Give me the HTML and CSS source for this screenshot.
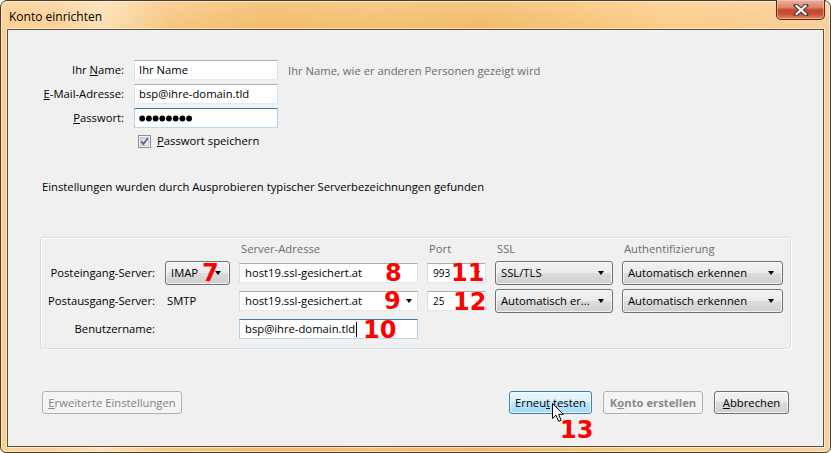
FILE: index.html
```html
<!DOCTYPE html>
<html lang="de">
<head>
<meta charset="utf-8">
<title>Konto einrichten</title>
<link rel="stylesheet" href="styles.css">
</head>
<body>
<div class="window">
  <div class="titlebar">
    <span class="title">Konto einrichten</span>
    <div class="close">
      <svg width="16" height="12" viewBox="0 0 16 12">
        <path d="M3 1.5 L13 10.5 M13 1.5 L3 10.5" stroke="#4a3a3a" stroke-width="4.2" stroke-linecap="square" fill="none"/>
        <path d="M3.5 2 L12.5 10 M12.5 2 L3.5 10" stroke="#ffffff" stroke-width="2.2" stroke-linecap="square" fill="none"/>
      </svg>
    </div>
  </div>
  <div class="client">
    <div class="identity">
      <label class="lbl">Ihr <u>N</u>ame:</label>
      <div class="textbox">Ihr Name</div>
      <span class="hint">Ihr Name, wie er anderen Personen gezeigt wird</span>
      <label class="lbl"><u>E</u>-Mail-Adresse:</label>
      <div class="textbox">bsp@ihre-domain.tld</div>
      <span></span>
      <label class="lbl"><u>P</u>asswort:</label>
      <div class="textbox focus">
        <svg width="56" height="7" viewBox="0 0 56 7">
          <circle cx="3.2" cy="3.5" r="2.9" fill="#000"/>
          <circle cx="9.9" cy="3.5" r="2.9" fill="#000"/>
          <circle cx="16.6" cy="3.5" r="2.9" fill="#000"/>
          <circle cx="23.3" cy="3.5" r="2.9" fill="#000"/>
          <circle cx="30.0" cy="3.5" r="2.9" fill="#000"/>
          <circle cx="36.7" cy="3.5" r="2.9" fill="#000"/>
          <circle cx="43.4" cy="3.5" r="2.9" fill="#000"/>
          <circle cx="50.1" cy="3.5" r="2.9" fill="#000"/>
        </svg>
      </div>
      <span></span>
      <span></span>
      <div class="check">
        <svg width="13" height="13" viewBox="0 0 13 13">
          <defs>
            <linearGradient id="cb" x1="0" y1="0" x2="1" y2="1">
              <stop offset="0" stop-color="#cdd1d6"/>
              <stop offset="1" stop-color="#f7f7f7"/>
            </linearGradient>
          </defs>
          <rect x="0.5" y="0.5" width="12" height="12" fill="#f4f4f4" stroke="#8f8f8f"/>
          <rect x="2.5" y="2.5" width="8" height="8" fill="url(#cb)" stroke="#a9adb3" stroke-width="0.6"/>
          <path d="M3.3 6.4 L5.4 9 L9.8 3.2" stroke="#4d6297" stroke-width="1.7" fill="none"/>
        </svg>
        <span><u>P</u>asswort speichern</span>
      </div>
    </div>

    <p class="status">Einstellungen wurden durch Ausprobieren typischer Serverbezeichnungen gefunden</p>

    <div class="group">
      <span></span>
      <span></span>
      <span class="head">Server-Adresse</span>
      <span class="head">Port</span>
      <span class="head">SSL</span>
      <span class="head">Authentifizierung</span>

      <span class="glbl">Posteingang-Server:</span>
      <div class="dropdown"><span>IMAP</span><i class="arrow"></i></div>
      <div class="cell"><div class="textbox">host19.ssl-gesichert.at</div></div>
      <div class="cell"><div class="textbox small">993<i class="arrow"></i></div></div>
      <div class="dropdown"><span>SSL/TLS</span><i class="arrow"></i></div>
      <div class="dropdown"><span>Automatisch erkennen</span><i class="arrow"></i></div>

      <span class="glbl">Postausgang-Server:</span>
      <span class="plain">SMTP</span>
      <div class="cell"><div class="textbox">host19.ssl-gesichert.at<i class="arrow"></i></div></div>
      <div class="cell"><div class="textbox small">25</div></div>
      <div class="dropdown"><span>Automatisch er...</span><i class="arrow"></i></div>
      <div class="dropdown"><span>Automatisch erkennen</span><i class="arrow"></i></div>

      <span class="glbl">Benutzername:</span>
      <span></span>
      <div class="cell"><div class="textbox focus">bsp@ihre-domain.tld<i class="caret"></i></div></div>
    </div>

    <div class="actions">
      <button class="btn disabled"><u>E</u>rweiterte Einstellungen</button>
      <div class="right">
        <button class="btn hover">Erneu<u>t</u> testen</button>
        <button class="btn disabled default">K<u>o</u>nto erstellen</button>
        <button class="btn"><u>A</u>bbrechen</button>
      </div>
    </div>
  </div>

  <span class="num n7">7</span>
  <span class="num n8">8</span>
  <span class="num n9">9</span>
  <span class="num n10">10</span>
  <span class="num n11">11</span>
  <span class="num n12">12</span>
  <span class="num n13">13</span>

  <svg class="cursor" width="13" height="20" viewBox="0 0 13 20">
    <path d="M0.5 0.5 L0.5 15.5 L4 12.2 L6.6 18.3 L9.1 17.2 L6.6 11.3 L11.3 11.3 Z" fill="#ffffff" stroke="#000000" stroke-width="1" stroke-linejoin="round"/>
  </svg>
</div>
</body>
</html>
```

FILE: styles.css
```css
html, body {
  margin: 0;
  padding: 0;
  background: #ffffff;
}

body {
  font-family: "Open Sans", "Noto Sans", "Liberation Sans", sans-serif;
  font-size: 11.25px;
  color: #000000;
}

.window {
  position: relative;
  width: 831px;
  height: 453px;
  box-sizing: border-box;
  border: 1px solid #4c3c26;
  border-radius: 7px 7px 6px 6px;
  padding: 0 6px 5px 6px;
  display: flex;
  flex-direction: column;
  background:
    linear-gradient(to bottom, rgba(255,255,255,0.18) 0px, rgba(255,255,255,0) 28px),
    linear-gradient(to right, #fbd093 0%, #fbd096 6%, #fde0b4 12%, #f7c680 20%, #f2bb6a 32%, #f4bf70 45%, #f1ba68 58%, #f7c478 70%, #fbcd8a 82%, #f8cb8e 92%, #f7d09c 100%);
  box-shadow: inset 0 0 0 1px rgba(255,255,255,0.55);
}

.titlebar {
  height: 28px;
  display: flex;
  align-items: flex-start;
}

.title {
  margin: 8px 0 0 2px;
  font-size: 12px;
  line-height: 16px;
  color: #000000;
}

.close {
  margin-left: auto;
  margin-top: -1px;
  margin-right: -1px;
  width: 49px;
  height: 20px;
  box-sizing: border-box;
  border: 1px solid #5c2a1c;
  border-top: none;
  border-radius: 0 0 5px 5px;
  background: linear-gradient(to bottom, #eab3a2 0%, #dd806a 40%, #c8462a 52%, #c9512f 75%, #e08f6a 100%);
  box-shadow: inset 0 0 0 1px rgba(255,220,200,0.45);
  display: flex;
  align-items: center;
  justify-content: center;
}

.client {
  flex: 1;
  border: 1px solid #5e4e36;
  background: #f0f0f0;
  display: flex;
  flex-direction: column;
  box-shadow: 0 0 0 1px rgba(255,255,255,0.5);
}

/* identity form */
.identity {
  display: grid;
  grid-template-columns: 116px 144px auto;
  grid-template-rows: 20px 20px 20px 18px;
  column-gap: 10px;
  row-gap: 4px;
  margin-top: 30px;
  align-items: center;
}

.lbl {
  text-align: right;
  line-height: 16px;
  white-space: nowrap;
}

.hint {
  color: #6d6d6d;
  white-space: nowrap;
}

.textbox {
  position: relative;
  box-sizing: border-box;
  height: 20px;
  background: #ffffff;
  border: 1px solid #dbdfe6;
  border-top-color: #abadb3;
  border-bottom-color: #e3e9ef;
  padding: 0 4px;
  display: flex;
  align-items: center;
  line-height: 16px;
  white-space: nowrap;
}

.textbox.focus {
  border-color: #b5cfe7;
  border-top-color: #3d7bad;
  border-bottom-color: #b7d9ed;
}

.textbox.small {
  font-size: 10px;
  padding-left: 3px;
}

.check {
  grid-column: 2 / 4;
  display: flex;
  align-items: center;
  gap: 6px;
  margin-left: 4px;
  line-height: 16px;
}

.check svg {
  display: block;
}

.status {
  margin: 29px 0 0 34px;
  line-height: 16px;
  white-space: nowrap;
}

/* server group */
.group {
  margin: 42px 0 0 32px;
  width: 751px;
  height: 112px;
  box-sizing: border-box;
  border: 1px solid #d5dfe5;
  border-radius: 3px;
  box-shadow: inset 1px 1px 0 #ffffff, 1px 1px 0 #ffffff;
  padding: 3px 0 7px 0;
  display: grid;
  grid-template-columns: 115px 65px 179px 59px 118px 161px;
  grid-template-rows: 16px 24px 24px 24px;
  column-gap: 9px;
  row-gap: 4px;
  align-items: center;
}

.head {
  color: #6d6d6d;
  line-height: 16px;
  padding-left: 2px;
  white-space: nowrap;
}

.glbl {
  text-align: right;
  padding-right: 1px;
  line-height: 16px;
  white-space: nowrap;
}

.plain {
  padding-left: 2px;
  line-height: 16px;
}

.cell {
  height: 24px;
  display: flex;
  align-items: center;
}

.cell .textbox {
  width: 100%;
  padding-left: 5px;
}

.dropdown {
  box-sizing: border-box;
  height: 24px;
  border: 1px solid #707070;
  border-radius: 3px;
  background: linear-gradient(to bottom, #f2f2f2 0%, #ebebeb 49%, #dddddd 50%, #cfcfcf 100%);
  box-shadow: inset 0 0 0 1px rgba(255,255,255,0.7);
  display: flex;
  align-items: center;
  justify-content: space-between;
  padding: 0 8px 0 5px;
  white-space: nowrap;
  line-height: 16px;
}

.arrow {
  display: block;
  width: 0;
  height: 0;
  border-left: 3.5px solid transparent;
  border-right: 3.5px solid transparent;
  border-top: 4px solid #000000;
}

.textbox .arrow {
  position: absolute;
  right: 5px;
  top: 7px;
}

.caret {
  display: inline-block;
  width: 1px;
  height: 15px;
  background: #000000;
  margin-left: 1px;
}

/* bottom buttons */
.actions {
  margin: 42px 34px 0 34px;
  display: flex;
  justify-content: space-between;
}

.right {
  display: flex;
  gap: 11px;
}

.btn {
  font: inherit;
  height: 23px;
  box-sizing: border-box;
  border: 1px solid #707070;
  border-radius: 3px;
  background: linear-gradient(to bottom, #f2f2f2 0%, #ebebeb 49%, #dddddd 50%, #cfcfcf 100%);
  box-shadow: inset 0 0 0 1px rgba(255,255,255,0.75);
  padding: 0;
  color: #000000;
  line-height: 16px;
  text-align: center;
  white-space: nowrap;
}

.actions > .btn { width: 140px; }
.right .btn:nth-child(1) { width: 83px; }
.right .btn:nth-child(2) { width: 100px; }
.right .btn:nth-child(3) { width: 75px; }

.btn.hover {
  border-color: #3c7fb1;
  background: linear-gradient(to bottom, #eaf6fd 0%, #d9f0fc 49%, #bee6fd 50%, #a7d9f5 100%);
}

.btn.disabled {
  border-color: #adb2b5;
  background: #f4f4f4;
  box-shadow: none;
  color: #838383;
}

.btn.default {
  font-weight: bold;
  color: #8a8a8a;
}

/* annotations */
.num {
  position: absolute;
  font-family: "DejaVu Sans", "Liberation Sans", sans-serif;
  font-weight: bold;
  font-size: 24px;
  line-height: 24px;
  color: #ff0000;
}

.n7 { left: 201px; top: 260px; }
.n8 { left: 384px; top: 260px; }
.n9 { left: 383px; top: 288px; }
.n10 { left: 362px; top: 317px; }
.n11 { left: 450px; top: 260px; }
.n12 { left: 452px; top: 289px; }
.n13 { left: 559px; top: 417px; }

.cursor {
  position: absolute;
  left: 551px;
  top: 402px;
}
```
